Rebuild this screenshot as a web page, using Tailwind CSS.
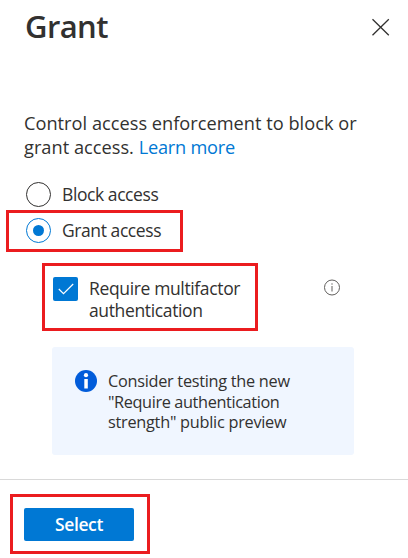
<!DOCTYPE html>
<html lang="en">
<head>
<meta charset="utf-8">
<title>Grant</title>
<script src="https://cdn.jsdelivr.net/npm/@tailwindcss/browser@4"></script>
</head>
<body class="bg-white">
<main class="relative flex h-[558px] w-[408px] flex-col overflow-hidden bg-white font-['Open_Sans','Noto_Sans',sans-serif] text-[#323130]">
  <header class="flex h-[111px] items-start justify-between pl-[25px] pr-[18px]">
    <h1 class="mt-[6px] text-[31px] leading-[40px] font-semibold tracking-[-0.6px] whitespace-nowrap">Grant</h1>
    <button class="mt-[18px]" aria-label="Close">
      <svg class="block size-[19px]" viewBox="0 0 19 19" fill="none" stroke="#323130" stroke-width="1.3"><path d="M1.5 1.2 17.8 17.2M17.8 1.2 1.5 17.2"/></svg>
    </button>
  </header>
  <p class="h-[71px] pl-[24px] text-[18.2px] leading-[24px] whitespace-nowrap"><span class="tracking-[0.02px]">Control access enforcement to block or</span><br><span class="tracking-[0.02px]">grant access.</span> <a class="tracking-[-0.22px] text-[#0078d4]">Learn more</a></p>
  <div class="flex h-[96px] flex-col gap-[11px] pl-[26px] text-[17.5px] leading-[25px] tracking-[-0.42px]">
    <label class="flex items-center gap-[11px] whitespace-nowrap"><span class="size-[25px] rounded-full border border-[#323130]"></span><span>Block access</span></label>
    <label class="flex items-center gap-[11px] whitespace-nowrap"><span class="flex size-[25px] items-center justify-center rounded-full border border-[#0078d4]"><span class="size-[11px] rounded-full bg-[#0078d4]"></span></span><span>Grant access</span></label>
  </div>
  <div class="flex h-[69px] items-start pl-[53px]">
    <span class="flex h-[24px] w-[25px] items-center justify-center rounded-[2px] bg-[#0078d4] -mt-px">
      <svg class="h-[12px] w-[16px]" viewBox="0 0 16 12" fill="none" stroke="#fff" stroke-width="1.2"><path d="m.8 6 4.7 4.7L15.2 1"/></svg>
    </span>
    <p class="-mt-px ml-[11px] w-[234px] text-[17.5px] leading-[22px] whitespace-nowrap"><span class="tracking-[-0.36px]">Require multifactor</span><br><span class="tracking-[-0.36px]">authentication</span></p>
    <svg class="mt-px size-[17px]" viewBox="0 0 17 17" fill="none" stroke="#605e5c"><circle cx="9" cy="8.5" r="7.5"/><path d="M9 7v5.5M9 4.3v1.4"/></svg>
  </div>
  <aside class="ml-[52px] flex h-[108px] w-[302px] items-start rounded-[3px] bg-[#f0f6ff] pl-[23px] pt-[23px]">
    <svg class="size-[22px]" viewBox="0 0 22 22"><circle cx="11" cy="11" r="11" fill="#015cda"/><circle cx="11" cy="5.2" r="2.1" fill="#fff"/><path fill="#fff" d="M9.3 9h3.5v9.5H9.3z"/></svg>
    <p class="mt-px ml-[11px] text-[16.3px] leading-[20.5px] whitespace-nowrap"><span class="tracking-[-0.28px]">Consider testing the new</span><br><span class="tracking-[-0.38px]">"Require authentication</span><br><span class="tracking-[-0.26px]">strength" public preview</span></p>
  </aside>
  <footer class="mt-[24px] h-[79px] border-t border-[#d9d9d9] pl-[24px] pt-[28px]">
    <button class="block h-[33px] w-[110px] rounded-[2px] bg-[#0078d4] text-[17.5px] leading-[31px] font-semibold tracking-[-0.4px] text-white">Select</button>
  </footer>
  <div class="pointer-events-none absolute left-[6px] top-[210px] h-[42px] w-[177px] border-3 border-[#eb1c1f]"></div>
  <div class="pointer-events-none absolute left-[42px] top-[263px] h-[68px] w-[216px] border-3 border-[#eb1c1f]"></div>
  <div class="pointer-events-none absolute left-[10px] top-[494px] h-[60px] w-[140px] border-3 border-[#eb1c1f]"></div>
</main>
</body>
</html>
